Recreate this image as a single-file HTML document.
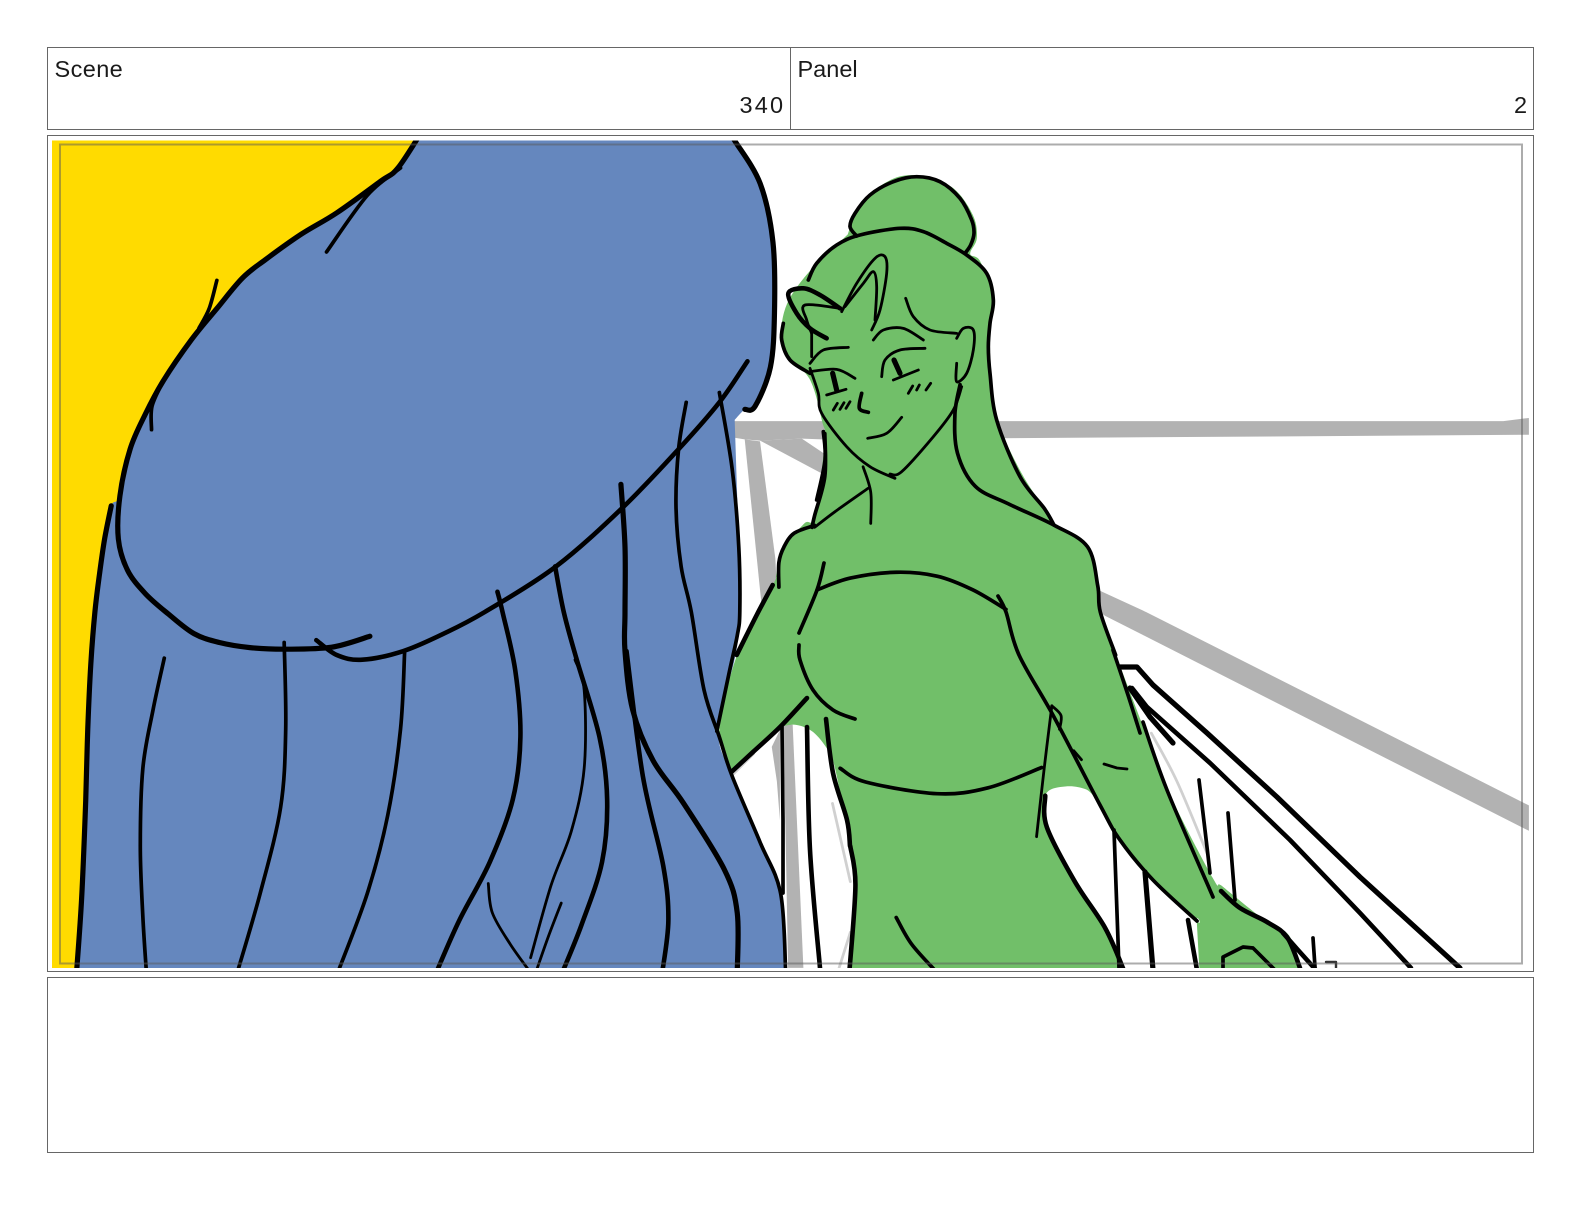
<!DOCTYPE html>
<html><head><meta charset="utf-8"><title>Scene 340 Panel 2</title>
<style>
html,body{margin:0;padding:0;background:#fff;width:1584px;height:1224px;overflow:hidden}
svg{position:absolute;left:0;top:0;display:block}
text{font-family:"Liberation Sans",sans-serif;font-size:23.5px;fill:#1a1a1a}
.a path{fill:none;stroke:#000;stroke-linecap:round;stroke-linejoin:round;vector-effect:non-scaling-stroke}
.w5{stroke-width:5.2px}.w4{stroke-width:4.6px}.w3{stroke-width:3.7px}.w2{stroke-width:2.8px}
</style></head><body>
<svg width="1584" height="1224" viewBox="0 0 1584 1224" xmlns="http://www.w3.org/2000/svg">
<defs><clipPath id="c"><rect x="52" y="140.5" width="1477" height="827.5"/></clipPath></defs>
<rect width="1584" height="1224" fill="#fff"/>
<g fill="none" stroke="#666" stroke-width="1">
<rect x="47.5" y="47.5" width="1486" height="82"/>
<path d="M790.5 47.5V129.5"/>
<rect x="47.5" y="135.5" width="1486" height="836"/>
<rect x="47.5" y="977.5" width="1486" height="175"/>
</g>
<text x="54.5" y="77" letter-spacing=".4">Scene</text>
<text x="797.5" y="77">Panel</text>
<text x="739.5" y="113" letter-spacing="2.2">340</text>
<text x="1514" y="113">2</text>
<g clip-path="url(#c)">
<rect x="52" y="140" width="480" height="830" fill="#FFDB00"/>
<!-- grey beams -->
<g transform="translate(784 0) scale(.5102 .3906)" fill="#B2B2B2">
<path d="M-97 1078L1410 1078L1460 1070L1460 1113L420 1122L75 1125L35 1123L-47 1128L-77 1125L-100 1120Z"/>
<path d="M35 1123L100 1180L100 1230L-47 1128Z"/>
<path d="M-77 1125L-47 1130L-17 1430L-10 1600L-40 1600Z"/>
<path d="M615 1510L710 1567L1460 2062L1460 2127L630 1577L610 1560Z"/>
<path d="M-1 1855L17 1855L38 2478L8 2478Z"/>
<path d="M-24 1912L-8 1869L-8 2100L-14 2000Z"/>
</g>
<!-- green figure -->
<g transform="translate(784 0) scale(.5102 .3906)">
<path class="k" fill="#71BF69" d="M125 600L150 520L210 460L265 450L330 480L370 550L378 610L365 650L385 670L412 770L405 830L405 950L420 1080L465 1210L510 1300L535 1345L595 1400L615 1500L620 1567L655 1692L700 1847L750 2017L840 2247L860 2270L947 2361L990 2395L1010 2478L1010 2478L1015 2600L1015 2600L130 2600L130 2600L130 2478L140 2267L130 2167L100 1967L86 1920L57 1874L25 1856L-2 1859L-8 1861L-8 1861L-102 1976L-102 1976L-127 1877L-92 1677L-22 1498L-16 1477L-12 1450L0 1400L40 1340L60 1320L80 1130L75 1080L50 970L0 900L0 800L40 710L125 600Z"/>
<path class="k" fill="#fff" d="M510 2037L525 2020L560 2013L590 2020L605 2035L619 2061L659 2150L723 2253L809 2358L809 2358L815 2500L815 2500L670 2500L670 2500L640 2397L570 2257L520 2137L510 2037Z"/>
</g>
<g class="a" transform="translate(784 0) scale(.5102 .3906)" style="opacity:.18">
<path class="w2 k" d="M95 2057L130 2257"/><path class="w2 k" d="M720 1877L770 2000L830 2187"/><path class="w2 k" d="M130 2387L108 2478"/>
<path class="w2 k" d="M-102 1985L-60 1930"/>
</g>
<!-- blue figure -->
<g transform="scale(.5102 .3906)">
<path class="k" fill="#6587BE" d="M820 340L780 430L745 465L660 545L590 600L520 665L475 712L425 790L375 870L320 975L285 1060L255 1150L235 1270L218 1295L205 1380L195 1470L186 1567L178 1700L172 1867L168 2050L160 2300L150 2478L150 2600L150 2600L1540 2600L1540 2600L1538 2478L1530 2287L1490 2157L1435 1987L1408 1872L1440 1687L1447 1627L1450 1567L1448 1400L1440 1075L1440 1075L1460 1048L1480 1040L1510 940L1518 800L1515 620L1490 470L1440 360L1420 330Z"/>
</g>
<!-- strokes on left half -->
<g class="a" transform="scale(.5102 .3906)">
<path class="w5 k" d="M830 330L780 430L745 465L660 545L590 600L520 665L475 712L425 790L375 870L320 975L285 1060L255 1150L235 1270L232 1380L250 1460L285 1520L330 1572L380 1622L430 1645L490 1658L560 1662L650 1657L725 1629"/>
<path class="w5 k" d="M1425 330L1440 360L1490 470L1515 620L1518 800L1510 940L1480 1040L1460 1048"/>
<path class="w5 k" d="M218 1295L205 1380L195 1470L186 1567L178 1700L172 1867L168 2050L160 2300L150 2490"/>
<path class="w4 k" d="M620 1639L660 1677L710 1689L790 1667L870 1622L950 1567L1090 1450L1220 1300L1330 1150L1410 1030L1465 925"/>
<path class="w3 k" d="M425 718L410 790L390 840"/>
<path class="w3 k" d="M785 430L720 500L640 645"/>
<path class="w3 k" d="M320 975L298 1040L297 1100"/>
<path class="w3 k" d="M1345 1030L1330 1150L1325 1300L1335 1450L1355 1567L1380 1767L1410 1887L1435 1987L1490 2157L1530 2287L1540 2490"/>
<path class="w3 k" d="M1410 1005L1435 1200L1448 1400L1450 1567L1445 1627L1430 1717L1405 1872"/>
<path class="w5 k" d="M1217 1240L1225 1400L1225 1567L1225 1667L1240 1817L1280 1947L1340 2057L1420 2227L1445 2337L1445 2490"/>
<path class="w4 k" d="M1228 1667L1260 1987L1300 2217L1310 2357L1298 2490"/>
<path class="w4 k" d="M975 1515L985 1567L1010 1717L1020 1887L1005 2047L960 2207L900 2357L855 2490"/>
<path class="w4 k" d="M1088 1450L1105 1567L1130 1687L1175 1887L1190 2047L1180 2207L1140 2367L1102 2490"/>
<path class="w2 k" d="M1127 1689L1145 1767L1145 1967L1120 2127L1080 2267L1040 2452"/>
<path class="w2 k" d="M1100 2312L1075 2397L1050 2490"/>
<path class="w2 k" d="M957 2262L965 2337L1000 2417L1040 2490"/>
<path class="w3 k" d="M322 1685L300 1817L280 1967L275 2167L280 2347L287 2490"/>
<path class="w3 k" d="M557 1645L560 1867L550 2067L510 2287L465 2490"/>
<path class="w3 k" d="M793 1672L785 1867L760 2087L720 2287L662 2490"/>
</g>
<!-- strokes right half -->
<g class="a" transform="translate(784 0) scale(.5102 .3906)">
<path class="w3 k" d="M60 1345L20 1365L0 1400L-10 1440L-10 1503"/>
<path class="w3 k" d="M80 1110L80 1220L60 1320L55 1350"/>
<path class="w2 k" d="M155 1195L170 1260L170 1340"/>
<path class="w2 k" d="M165 1250L100 1310L60 1350"/>
<path class="w3 k" d="M345 985L335 1060L340 1160L375 1245L440 1290L530 1345L595 1400L615 1500L620 1567L650 1677"/>
<path class="w3 k" d="M65 1510L130 1480L220 1465L300 1475L370 1510L435 1560"/>
<path class="w3 k" d="M110 1967L160 2002L300 2032L400 2017L505 1965"/>
<path class="w4 k" d="M130 2167L140 2267L128 2490"/>
<path class="w2 k" d="M525 1807L510 1967L495 2142"/>
<path class="w2 k" d="M525 1807L543 1832L540 1867"/>
<path class="w2 k" d="M568 1922L583 1945"/>
<path class="w3 k" d="M220 2349L250 2417L300 2490"/>
<path class="w4 k" d="M512 2037L515 2117L570 2257L630 2377L668 2490"/>
</g>
<!-- strokes in real pixel coordinates -->
<g class="a">
<path class="w3" d="M782 727L783 820L783 893"/>
<path class="w4 k" d="M807 727L810 850L820 968"/>
<path class="w4 k" d="M731.7 771.7L753 752L780 727L807 698"/>
<path class="w4 k" d="M772.7 585L756.7 615L736.7 655"/>
<path class="w3 k" d="M824 563L817 590L799 633"/>
<path class="w3 k" d="M799 645L800 660L813 690L833 710L855 719"/>
<path class="w4 k" d="M826 719L833 773L847 820L850 846"/>
<path class="w5" d="M1120 667L1137 667L1153 685L1207 733L1277 797L1360 877L1460 968"/>
<path class="w4" d="M1132 688L1147 707L1210 763L1290 840L1360 913L1411 968"/>
<path class="w5" d="M1130 688L1150 717L1173 743"/>
<path class="w3 k" d="M1113 650L1128 695L1140 733"/>
<path class="w3 k" d="M1143 722L1167 790L1213 897"/>
<path class="w4 k" d="M1221 891L1240 908L1267 922L1287 937L1300 968"/>
<path class="w4" d="M1283 933L1298 950L1316 970"/>
<path class="w3 k" d="M1199 780L1205 830L1210 873"/>
<path class="w3" d="M1228 813L1235 900"/>
<path class="w3" d="M1114 830L1119 968"/>
<path class="w5" d="M1145 872L1153 970"/>
<path class="w4" d="M1188 920L1197 970"/>
<path class="w3 k" d="M998 596L1006 612L1019 655L1054 717L1100 805L1120 840L1153 880L1197 921"/>
<path class="w3" d="M1223 970L1223 957L1243 947L1253 948L1275 970"/>
<path class="w3" d="M1313 938L1315 967"/>
<path class="w2" d="M1104 764L1117 768L1127 769"/>
<path d="M1326 962L1336 962L1336 970" style="stroke:#333;stroke-width:2.4px"/>
</g>
<!-- face details -->
<g class="a" transform="translate(760 160) scale(.33333)">
<path class="w3 k" d="M145 360L170 310L230 255L300 225L420 205L490 215L560 250L620 285L680 340L700 420L690 490L685 560L690 640L710 780L780 950L852 1044L882 1095"/>
<path class="w3 k" d="M290 228L270 200L285 160L330 105L400 65L470 50L540 65L600 115L635 180L642 220L632 255L615 280"/>
<path class="w4 k" d="M240 445L180 405L130 385L85 400L110 460L150 505L200 535"/>
<path class="w2 k" d="M240 445L135 435L140 480L155 520"/><path class="w2" d="M155 520L155 590"/>
<path class="w3 k" d="M70 490L65 540L90 600L150 640"/>
<path class="w2 k" d="M245 455L290 370L345 295L375 290L380 340L360 450L335 510"/>
<path class="w2 k" d="M255 440L310 370L340 335L350 380L345 480"/>
<path class="w2 k" d="M437 415L460 470L510 510L590 520"/>
<path class="w2 k" d="M590 535L610 505L640 510L640 570L620 640L590 665L590 610"/>
<path class="w2 k" d="M340 540L370 510L430 505L490 540"/>
<path class="w2 k" d="M150 610L190 570L265 562"/>
<path class="w2 k" d="M150 635L230 628L285 655"/>
<path class="w5" d="M218 640L230 690"/>
<path class="w2" d="M200 705L258 688"/>
<path class="w2 k" d="M495 565L420 570L375 600L365 650"/>
<path class="w5" d="M402 600L420 640"/>
<path class="w2" d="M400 660L475 630"/>
<path class="w2" d="M220 750L232 730M240 748L252 728M258 745L270 725M445 700L458 678M470 690L478 675M498 690L512 670"/>
<path class="w3 k" d="M305 700L298 745L325 757"/>
<path class="w2 k" d="M323 835L380 820L425 772"/>
<path class="w2 k" d="M150 625L175 700L185 760L260 860L330 920L405 955"/>
<path class="w2 k" d="M390 942L425 935L520 830L580 750L605 680"/>
<path class="w3 k" d="M190 815L195 900L170 1020"/>
</g>
<rect x="60" y="144.5" width="1462" height="819" fill="none" stroke="#5a5a5a" stroke-opacity=".5" stroke-width="2"/>
</g>
</svg>
<script>
document.querySelectorAll('path.k').forEach(function(p){
var d=p.getAttribute('d'),closed=/Z\s*$/.test(d),n=d.match(/-?\d+(\.\d+)?/g).map(Number),q=[];
for(var i=0;i<n.length;i+=2)q.push([n[i],n[i+1]]);
if(q.length<3)return;
var s='M'+q[0][0]+' '+q[0][1],L=q.length;
for(var j=0;j<L-1;j++){
var a=q[Math.max(j-1,0)],b=q[j],c=q[j+1],e=q[Math.min(j+2,L-1)];
s+='C'+(b[0]+(c[0]-a[0])/6)+' '+(b[1]+(c[1]-a[1])/6)+' '+(c[0]-(e[0]-b[0])/6)+' '+(c[1]-(e[1]-b[1])/6)+' '+c[0]+' '+c[1];
}
p.setAttribute('d',s+(closed?'Z':''));
});
</script>
</body></html>
